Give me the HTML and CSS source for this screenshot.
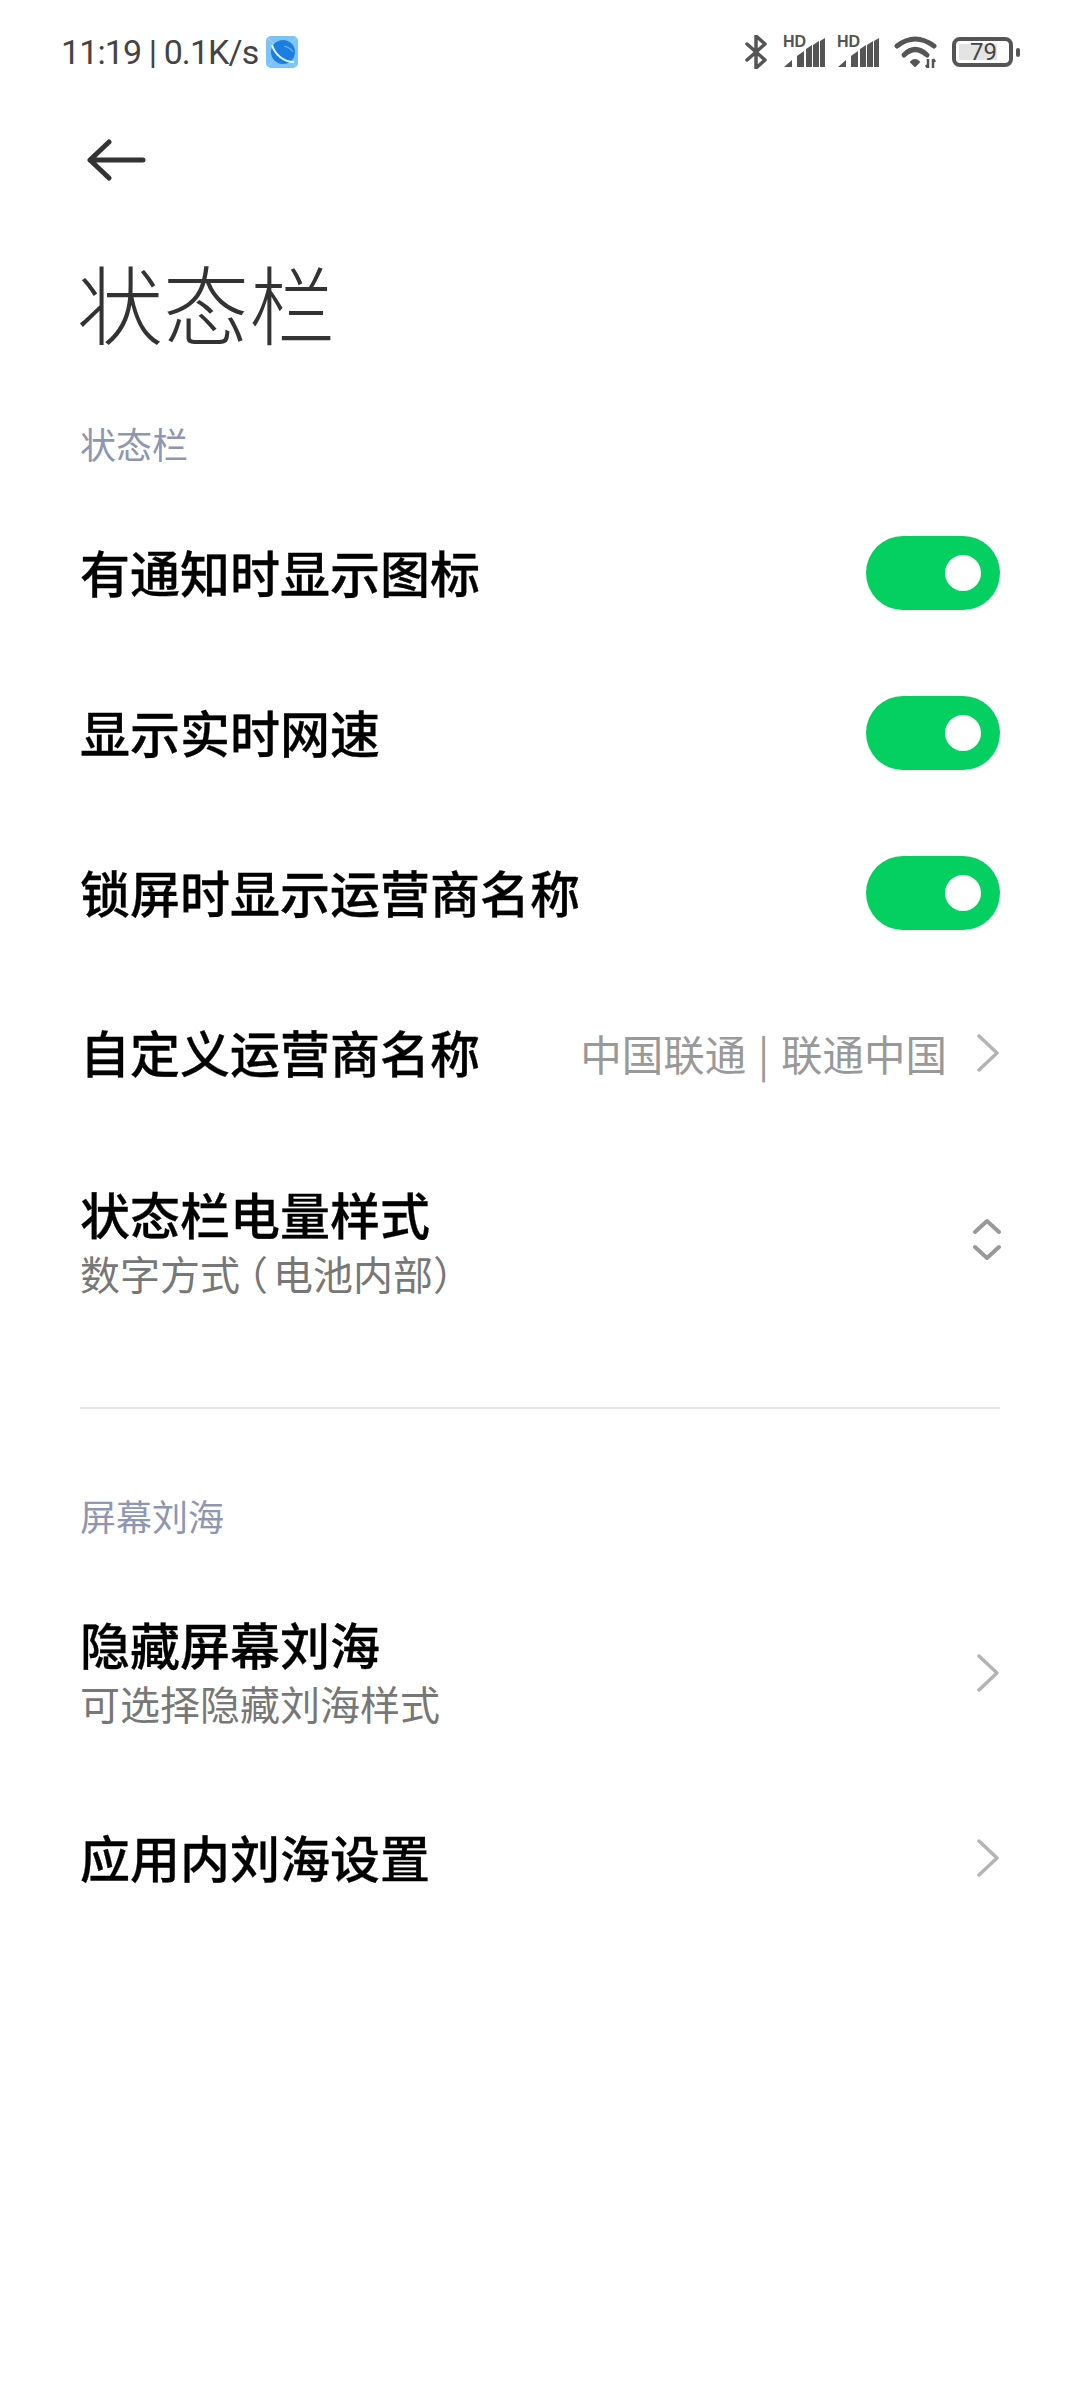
FILE: index.html
```html
<!DOCTYPE html>
<html lang="zh-CN">
<head>
  <meta charset="UTF-8" />
  <meta name="viewport" content="width=device-width, initial-scale=1.0"/>
  <title>状态栏</title>
  <link rel="stylesheet" href="styles.css">
</head>
<body>
  <div class="status-bar">
    <div class="status-left">
      <span class="status-text">11:19 | 0.1K/s</span>
      <svg class="app-icon" width="32" height="32" viewBox="0 0 32 32">
        <rect width="32" height="32" rx="5" fill="#7cc4f8"/>
        <path d="M2 2L30 30M30 2L2 30" stroke="#9ad2fa" stroke-width="1"/>
        <circle cx="17" cy="16" r="12" fill="#1a7fe0"/>
        <path d="M6 9C9 19 18 26 28 26" fill="none" stroke="#e8f5ff" stroke-width="2"/>
        <path d="M18 10C22 11 25 13 27 16" fill="none" stroke="#6db8f5" stroke-width="1.2"/>
      </svg>
    </div>
    <div class="status-right">
      <svg class="bt" width="22" height="34" viewBox="0 0 22 34">
        <path d="M2 9L20 25L11 33V1L20 9L2 25" fill="none" stroke="#555" stroke-width="3.5" stroke-linejoin="round" stroke-linecap="round"/>
      </svg>
      <div class="signal">
        <span class="hd">HD</span>
        <svg width="42" height="29" viewBox="0 0 42 29">
          <path d="M1 29L9 22V29ZM14 29V18L21 13V29ZM23 29V11L29 7V29ZM30 29V7L36 3V29ZM37 29V3L42 0V29Z" fill="#555"/>
        </svg>
      </div>
      <div class="signal">
        <span class="hd">HD</span>
        <svg width="42" height="29" viewBox="0 0 42 29">
          <path d="M1 29L9 22V29ZM14 29V18L21 13V29ZM23 29V11L29 7V29ZM30 29V7L36 3V29ZM37 29V3L42 0V29Z" fill="#555"/>
        </svg>
      </div>
      <svg class="wifi" width="44" height="32" viewBox="0 0 44 32">
        <path d="M3 10Q21 -4 40 10" fill="none" stroke="#555" stroke-width="5" stroke-linecap="round"/>
        <path d="M10 19Q21 8 33 19" fill="none" stroke="#555" stroke-width="5" stroke-linecap="round"/>
        <path d="M17 26Q21 22 25 26L21 30Z" fill="#555" stroke="#555" stroke-width="2" stroke-linejoin="round"/>
        <path d="M34 23V32M34 32L32 29M39 32V23M39 23L41 26" fill="none" stroke="#555" stroke-width="2.5"/>
      </svg>
      <div class="battery">
        <div class="battery-body">
          <div class="battery-fill"></div>
          <span class="battery-num">79</span>
        </div>
        <div class="battery-nub"></div>
      </div>
    </div>
  </div>

  <div class="nav">
    <svg width="60" height="42" viewBox="0 0 60 42">
      <path d="M3 21H56M22 3L3 21L22 39" fill="none" stroke="#333" stroke-width="5" stroke-linecap="round" stroke-linejoin="round"/>
    </svg>
  </div>

  <h1 class="page-title">状态栏</h1>

  <div class="section-label first">状态栏</div>

  <div class="row">
    <div class="row-title">有通知时显示图标</div>
    <div class="toggle"><div class="knob"></div></div>
  </div>
  <div class="row">
    <div class="row-title">显示实时网速</div>
    <div class="toggle"><div class="knob"></div></div>
  </div>
  <div class="row">
    <div class="row-title">锁屏时显示运营商名称</div>
    <div class="toggle"><div class="knob"></div></div>
  </div>
  <div class="row">
    <div class="row-title">自定义运营商名称</div>
    <div class="row-right">
      <span class="row-value">中国联通 | 联通中国</span>
      <svg class="chevron" width="22" height="38" viewBox="0 0 22 38">
        <path d="M2 2L20 19L2 36" fill="none" stroke="#b4b4b4" stroke-width="3.5" stroke-linecap="round" stroke-linejoin="round"/>
      </svg>
    </div>
  </div>
  <div class="row tall battery-style">
    <div>
      <div class="row-title">状态栏电量样式</div>
      <div class="row-sub">数字方式<span class="paren">（</span>电池内部）</div>
    </div>
    <svg class="updown" width="28" height="44" viewBox="0 0 28 44">
      <path d="M2 14L14 3L26 14M2 29L14 40L26 29" fill="none" stroke="#999" stroke-width="4" stroke-linecap="round" stroke-linejoin="round"/>
    </svg>
  </div>

  <div class="divider"></div>

  <div class="section-label">屏幕刘海</div>

  <div class="row tall notch">
    <div>
      <div class="row-title">隐藏屏幕刘海</div>
      <div class="row-sub">可选择隐藏刘海样式</div>
    </div>
    <svg class="chevron" width="22" height="38" viewBox="0 0 22 38">
      <path d="M2 2L20 19L2 36" fill="none" stroke="#b4b4b4" stroke-width="3.5" stroke-linecap="round" stroke-linejoin="round"/>
    </svg>
  </div>
  <div class="row">
    <div class="row-title">应用内刘海设置</div>
    <svg class="chevron" width="22" height="38" viewBox="0 0 22 38">
      <path d="M2 2L20 19L2 36" fill="none" stroke="#b4b4b4" stroke-width="3.5" stroke-linecap="round" stroke-linejoin="round"/>
    </svg>
  </div>
</body>
</html>
```

FILE: styles.css
```css
body {
  margin: 0;
  width: 1080px;
  height: 2400px;
  overflow: hidden;
  background: #fff;
  font-family: "Noto Sans CJK SC", "Noto Sans", sans-serif;
}

.status-bar {
  height: 104px;
  padding: 0 60px 0 61px;
  box-sizing: border-box;
  display: flex;
  justify-content: space-between;
  align-items: center;
}

.status-left {
  display: flex;
  align-items: center;
  gap: 8px;
}

.status-text {
  font-family: Roboto, sans-serif;
  font-size: 34px;
  letter-spacing: -0.9px;
  color: #444;
}

.status-right {
  display: flex;
  align-items: center;
  gap: 12px;
}

.bt {
  margin-right: 4px;
}

.signal {
  position: relative;
  width: 42px;
  height: 29px;
}

.signal svg {
  display: block;
}

.hd {
  position: absolute;
  left: 0;
  top: -3px;
  font-family: "Liberation Sans", sans-serif;
  font-size: 16px;
  font-weight: bold;
  line-height: 14px;
  color: #555;
}

.wifi {
  margin-left: 3px;
}

.battery {
  display: flex;
  align-items: center;
  gap: 3px;
  margin-left: 2px;
}

.battery-body {
  position: relative;
  width: 61px;
  height: 30px;
  box-sizing: border-box;
  border: 4px solid #555;
  border-radius: 8px;
}

.battery-fill {
  position: absolute;
  left: 3px;
  top: 3px;
  bottom: 3px;
  width: 38px;
  background: #e4e4e4;
}

.battery-num {
  position: absolute;
  left: 2px;
  right: 0;
  top: 0;
  text-align: center;
  font-family: Roboto, sans-serif;
  font-size: 24px;
  line-height: 22px;
  color: #444;
}

.battery-nub {
  width: 4px;
  height: 9px;
  background: #555;
  border-radius: 2px;
}

.nav {
  height: 66px;
  margin-top: 23px;
  padding-left: 87px;
  display: flex;
  align-items: center;
}

.page-title {
  margin: 59px 0 0 77px;
  font-size: 86px;
  font-weight: 300;
  line-height: 100px;
  color: #333;
}

.section-label {
  margin: 81px 0 0 80px;
  font-size: 36px;
  line-height: 50px;
  color: #8f96b3;
}

.section-label.first {
  margin-top: 66px;
  margin-bottom: 25px;
}

.row {
  height: 160px;
  padding: 0 80px;
  display: flex;
  justify-content: space-between;
  align-items: center;
}

.row-title {
  padding-top: 5px;
  font-family: "Liberation Sans", "Noto Sans CJK SC", sans-serif;
  font-size: 50px;
  font-weight: 500;
  line-height: 60px;
  color: #000;
  -webkit-text-stroke: 0.3px #000;
}

.row-sub {
  font-family: "Liberation Sans", "Noto Sans CJK SC", sans-serif;
  font-size: 40px;
  line-height: 56px;
  color: #777;
}

.paren {
  margin: 0 5px 0 8px;
  font-feature-settings: "halt";
}

.row-right {
  display: flex;
  align-items: center;
  gap: 30px;
}

.row-value {
  font-size: 41.5px;
  word-spacing: 2.5px;
  color: #999;
}

.chevron {
  margin-right: 1px;
}

.toggle {
  width: 134px;
  height: 74px;
  border-radius: 37px;
  background: #03d061;
  display: flex;
  align-items: center;
  justify-content: flex-end;
  padding-right: 19px;
  box-sizing: border-box;
}

.knob {
  width: 36px;
  height: 36px;
  border-radius: 50%;
  background: #fff;
}

.row.tall {
  height: 210px;
}

.row.battery-style {
  margin-top: 5px;
}

.row.notch {
  margin-top: 28px;
}

.updown {
  margin: 0 -1px 6px 0;
}

.divider {
  height: 2px;
  margin: 59px 80px 0;
  background: #e6e6e6;
}
```
